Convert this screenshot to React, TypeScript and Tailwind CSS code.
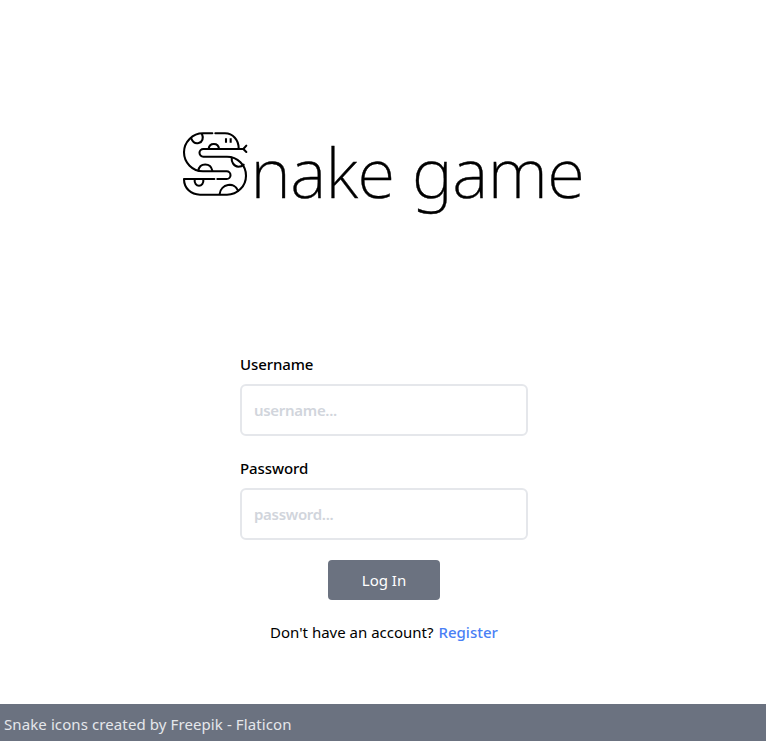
function SnakeIcon() {
  return (
    <svg
      className="h-16 w-16 shrink-0 overflow-visible"
      viewBox="21 18 192 192"
      fill="none"
      stroke="black"
      strokeWidth="6.2"
      strokeLinecap="round"
      strokeLinejoin="round"
    >
      <path d="M109 22H81A57 57 0 0 0 81 136H152A11.5 11.5 0 0 1 152 159H124" />
      <path d="M115 159H24C24 187 45 206 72 206H153A57 57 0 0 0 153 92H82A11.5 11.5 0 0 1 82 69H202" />
      <path d="M118 22H147C171 22 188 42 188 67" />
      <path d="M211 59L202 69L211 78" />
      <path d="M46 38C51 50 60 53 68 51C80 48 83 36 78 24" />
      <path d="M98 68C100 49 127 49 129 68" />
      <path d="M67 134C71 109 104 109 109 134" />
      <path d="M56 160C53 186 85 186 82 160" />
      <path d="M131 204C134 174 176 166 186 194" />
      <path d="M167 95C166 108 173 121 187 122C194 122 199 120 203 116" />
      <path d="M150 37V50M164 37V50" strokeLinecap="butt" />
    </svg>
  );
}

function Field({ id, label, placeholder, type }: { id: string; label: string; placeholder: string; type: string }) {
  return (
    <div className="flex flex-col gap-2">
      <label htmlFor={id} className="h-6 text-[15px] leading-6 font-medium tracking-[-0.1px]">
        {label}
      </label>
      <input
        id={id}
        type={type}
        placeholder={placeholder}
        className="h-[52px] w-full rounded-md border-2 border-gray-200 px-3 text-[15px] font-semibold tracking-[-0.3px] placeholder:text-gray-300"
      />
    </div>
  );
}

export default function App() {
  return (
    <div className="flex h-[741px] w-full flex-col bg-white font-['Noto_Sans','Open_Sans',sans-serif] text-black">
      <header className="flex h-[352px] items-start pt-[132px] pl-[183px]">
        <SnakeIcon />
        <h1 className="-mt-1.5 ml-[3.5px] text-[69px] leading-[90px] font-extralight tracking-[-0.5px] whitespace-nowrap [-webkit-text-stroke:0.4px_black]">
          nake game
        </h1>
      </header>
      <main className="flex flex-1 flex-col items-center pl-0.5">
        <form className="flex w-72 flex-col gap-5">
          <Field id="username" label="Username" placeholder="username..." type="text" />
          <Field id="password" label="Password" placeholder="password..." type="password" />
          <button type="button" className="h-10 w-28 self-center rounded bg-[#6b7280] text-[15px] text-white">
            Log In
          </button>
        </form>
        <p className="mt-5 text-[15px] leading-6 whitespace-nowrap">
          <span className="mr-px">Don't have an account?</span>{" "}
          <a className="font-medium text-[#4a7ff5]">Register</a>
        </p>
      </main>
      <footer className="flex h-[37px] items-center bg-[#6b7280] px-1 pt-1 text-[15px] text-gray-200">
        <span className="tracking-[0.1px]">Snake icons created by Freepik - Flaticon</span>
      </footer>
    </div>
  );
}
